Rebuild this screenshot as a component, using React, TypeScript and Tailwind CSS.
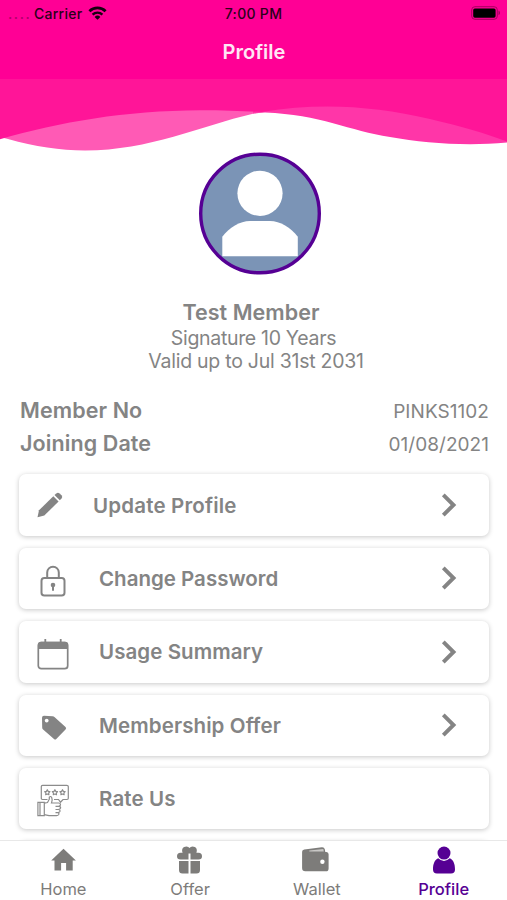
import React from "react";

interface IconProps {
  className?: string;
}

function WifiIcon() {
  return (
    <svg className="w-[19px] h-[14px]" viewBox="0 0 19 14" fill="none">
      <path d="M1.4 5.2a11.6 11.6 0 0 1 16.2 0" stroke="#160010" strokeWidth="2.8" />
      <path d="M4.6 8.6a7 7 0 0 1 9.8 0" stroke="#160010" strokeWidth="2.4" />
      <path d="M9.5 13.8 6.6 10.9a4.2 4.2 0 0 1 5.8 0z" fill="#160010" />
    </svg>
  );
}

function BatteryIcon() {
  return (
    <svg className="w-[30px] h-[14px]" viewBox="0 0 30 14">
      <rect x="0.7" y="0.7" width="25.6" height="12.6" rx="3.2" fill="none" stroke="#a8005f" />
      <rect x="2.2" y="2.4" width="22.4" height="9.3" rx="1.6" fill="#000" />
      <path d="M27.5 4.8c2 .5 2 3.9 0 4.4z" fill="#a8005f" />
    </svg>
  );
}

function Waves() {
  return (
    <svg className="block w-full h-[73px]" viewBox="0 79 507 73" preserveAspectRatio="none">
      <path
        d="M0 79V137L8 139C35 146.500 60 150.500 85 150.500C150 150.500 200 126 253 113.800L265 112V79Z"
        fill="#ff5ab5"
      />
      <path
        d="M253 79V113.500Q259 112.400 265 112.500C320 114.500 350 131 390 137C425 143 465 146.500 507 142.500V79Z"
        fill="#ff36a8"
      />
      <path
        d="M0 79V139.200C60 122 125 110.500 200 110.200C225 110.200 245 111 262 112C320 102 375 106 430 119C460 126 485 133 507 141.500V79Z"
        fill="#ff1598"
      />
    </svg>
  );
}

function Avatar() {
  return (
    <svg className="w-[122px] h-[123px]" viewBox="0 0 122 123">
      <circle cx="61" cy="61.500" r="59.300" fill="#7b94b6" stroke="#560094" strokeWidth="3.400" />
      <circle cx="61" cy="41.300" r="22.600" fill="#fff" />
      <path d="M23.300 104.300V84.800C30 75.500 41 69 51 69H71C81 69 92 75.500 98.800 84.800V104.300Z" fill="#fff" />
    </svg>
  );
}

function PencilIcon() {
  return (
    <svg className="w-[26px] h-[26px]" viewBox="0 0 26 26" fill="#848484">
      <path d="M.5 25.200 2 18.300 16.300 4.300 21.600 9.500 7.300 23.500Z" />
      <path d="M17.500 3.100 19.300 1.400Q20.900 0 22.600 1.400L24.500 3.300Q26 5 24.500 6.600L22.800 8.300Z" />
    </svg>
  );
}

function LockIcon() {
  return (
    <svg className="w-[26px] h-[32px]" viewBox="0 0 26 32" fill="none" stroke="#848484" strokeWidth="2">
      <path d="M7.200 13V7.500a5.800 5.800 0 0 1 11.600 0V13" />
      <rect x="1.500" y="13" width="23" height="17.600" rx="2.800" />
      <circle cx="13" cy="20" r="2.300" fill="#848484" stroke="none" />
      <path d="M13 20.500V25.700" />
    </svg>
  );
}

function CalendarIcon() {
  return (
    <svg className="w-[32px] h-[32px]" viewBox="0 0 32 32">
      <rect x="1.300" y="4.500" width="29.400" height="26.200" rx="3" fill="none" stroke="#848484" strokeWidth="1.700" />
      <path d="M1 11V6.500Q1 3.700 4 3.700H28Q31 3.700 31 6.500V11Z" fill="#848484" />
      <path d="M8.300 1V6M23.700 1V6" stroke="#848484" strokeWidth="1.800" />
    </svg>
  );
}

function TagIcon() {
  return (
    <svg className="w-[26px] h-[26px]" viewBox="0 0 26 26">
      <path
        d="M1 2.800Q1 .8 3 .8L11.500 1.300Q12.800 1.400 13.700 2.200L24.500 12Q25.800 13.200 24.500 14.400L15.300 24Q14.200 25.100 13 24L2.100 14.600Q1.200 13.800 1.200 12.500Z"
        fill="#848484"
      />
      <circle cx="5.700" cy="5.600" r="1.900" fill="#fff" />
    </svg>
  );
}

const STAR = "M0-2.600.9-.9 2.600-.6 1.400.7 1.600 2.400 0 1.700-1.600 2.400-1.400.7-2.600-.6-.9-.9Z";

function RateIcon() {
  return (
    <svg className="w-[33px] h-[33px]" viewBox="0 0 33 33" fill="none" stroke="#8c8c8c" strokeWidth="1.200">
      <path d="M10.500 15.500H5.500Q4.300 15.500 4.300 14.300V2.500Q4.300 1.300 5.500 1.300H29.800Q31.300 1.300 31.300 2.500V14.300Q31.300 15.500 30 15.500H26L23.500 18.200 21.500 15.500H17" />
      <path d={STAR} transform="translate(10.300 8.300)" strokeLinejoin="round" />
      <path d={STAR} transform="translate(17.900 8.300)" strokeLinejoin="round" />
      <path d={STAR} transform="translate(25.500 8.300)" strokeLinejoin="round" />
      <path d="M.9 18.300H7.300V31.700H.9ZM3 18.300V31.700" />
      <path d="M7.300 19.200 10.500 18.500 12.300 15.200V13.200Q13.500 11.700 14.700 13.500 15.800 16 14.500 19H21.800Q23.600 19.200 23.500 20.600 23.400 22.200 21.500 22.300H18.500M21.800 22.300Q24.100 22.700 23.500 24.300 23 25.500 21.300 25.500H18.500M21.500 25.500Q23.500 26 22.900 27.500 22.400 28.600 20.800 28.600H18.500M21 28.600Q22.400 29.400 21.800 30.500 21 31.600 19.500 31.600H12L7.300 30.600" />
    </svg>
  );
}

function ChevronIcon() {
  return (
    <svg className="w-[16px] h-[26px]" viewBox="0 0 16 26" fill="none">
      <path d="M2.300 2.900 12.500 13 2.300 23.100" stroke="#848484" strokeWidth="3.900" />
    </svg>
  );
}

function HomeIcon({ className }: IconProps) {
  return (
    <svg className={className} viewBox="0 0 28 28" fill="currentColor">
      <path d="M14.500 2.700 2.200 14.400H5.500V24.500H12.100V17H17.100V24.500H23.700V14.400H26.900Z" />
    </svg>
  );
}

function GiftIcon({ className }: IconProps) {
  return (
    <svg className={className} viewBox="0 0 28 28" fill="currentColor">
      <path d="M4.500 6.700H6.600C5.200 3.500 7 .6 10.500.6Q12.500.7 13.500 2 14.500.7 16.500.6C20 .6 21.800 3.500 20.400 6.700H22.500Q26 7 26 10.200 26 13.400 22.500 13.500H14.500V7.500H12.500V13.500H4.500Q1 13.400 1 10.200 1 7 4.500 6.700Z" />
      <path d="M3 15H12.500V27.500H6.500Q3 27.500 3 24ZM14.500 15H24V24Q24 27.500 20.500 27.500H14.500Z" />
    </svg>
  );
}

function WalletIcon({ className }: IconProps) {
  return (
    <svg className={className} viewBox="0 0 28 28" fill="currentColor">
      <path d="M-.9 5.800Q-.9 3.900 1.300 3.600L18.800 1.300Q21.300 1.100 21.800 3.300L22.300 6H23.500Q25.600 6.200 25.600 8.300V22.400Q25.600 25.300 22.800 25.300H2.300Q-.9 25.300-.9 22.100Z" />
      <path d="M6.300 4.600 20.300 3.100 20.800 5.500H6.300Z" fill="#c9c8c6" />
      <circle cx="19.400" cy="15.800" r="2.200" fill="#fff" />
    </svg>
  );
}

function PersonIcon({ className }: IconProps) {
  return (
    <svg className={className} viewBox="0 0 28 28" fill="currentColor">
      <circle cx="14" cy="7.100" r="6.500" />
      <path d="M8.200 12.300Q14 17.700 19.800 12.300C23.500 14 25 18 25 23.500Q25 27.400 21 27.400H7Q3 27.400 3 23.500C3 18 4.500 14 8.200 12.300Z" />
    </svg>
  );
}

const menuItems = [
  {
    label: "Update Profile",
    icon: <PencilIcon />,
    iconClass: "pl-[18px] w-[74px]",
    labelClass: "tracking-[0.18px]",
    arrow: true,
  },
  {
    label: "Change Password",
    icon: <LockIcon />,
    iconClass: "pl-[21px] pt-[5px] w-[80px]",
    labelClass: "tracking-[0px]",
    arrow: true,
  },
  {
    label: "Usage Summary",
    icon: <CalendarIcon />,
    iconClass: "pl-[18px] pt-[5px] w-[80px]",
    labelClass: "tracking-[0.07px]",
    arrow: true,
  },
  {
    label: "Membership Offer",
    icon: <TagIcon />,
    iconClass: "pl-[22px] pt-[5px] w-[80px]",
    labelClass: "tracking-[0.1px]",
    arrow: true,
  },
  {
    label: "Rate Us",
    icon: <RateIcon />,
    iconClass: "pl-[18px] pt-[4px] w-[80px]",
    labelClass: "tracking-[0.15px]",
    arrow: false,
  },
];

const tabs = [
  { label: "Home", Icon: HomeIcon },
  { label: "Offer", Icon: GiftIcon },
  { label: "Wallet", Icon: WalletIcon },
  { label: "Profile", Icon: PersonIcon },
];

function App() {
  const selectedTab = "Profile";

  return (
    <div className="w-full h-[900px] flex flex-col overflow-hidden bg-white font-[Inter,sans-serif] text-[#848484]">
      <header className="h-[79px] shrink-0 bg-[#ff0095]">
        <div className="h-[26px] pl-[8px] pr-[6px] grid grid-cols-3 items-center text-[#2b0019] text-[14px] font-medium">
          <div className="flex items-center">
            <span className="w-[26px] text-[#b0006a] tracking-[1.600px]">....</span>
            <span className="mr-[6px] tracking-[0.25px]">Carrier</span>
            <WifiIcon />
          </div>
          <div className="pr-[2px] text-center tracking-[0.3px]">7:00 PM</div>
          <div className="flex justify-end">
            <BatteryIcon />
          </div>
        </div>
        <h1 className="h-[53px] pl-px text-center text-[20px] leading-[53px] font-semibold text-[#ffe6f5]">
          Profile
        </h1>
      </header>

      <main className="flex-1 min-h-0 overflow-hidden">
        <Waves />

        <div className="pl-[13px] h-[122px] flex justify-center">
          <Avatar />
        </div>

        <div className="pt-[25px] pl-[5px] text-center">
          <div className="pr-[10px] text-[21.500px] leading-[26px] font-semibold tracking-[0.05px]">
            Test Member
          </div>
          <div className="pt-px pr-[5px] text-[19.500px] leading-[24px] tracking-[-0.32px]">
            Signature 10 Years
          </div>
          <div className="text-[19.500px] leading-[23px] tracking-[-0.26px]">
            Valid up to Jul 31st 2031
          </div>
        </div>

        <div className="pt-[21px] pl-[20px] pr-[18px]">
          <div className="h-[33px] flex items-center justify-between">
            <span className="text-[21.500px] font-semibold tracking-[0.1px]">Member No</span>
            <span className="pt-[3px] text-[19px] tracking-[0.05px]">PINKS1102</span>
          </div>
          <div className="h-[33px] flex items-center justify-between">
            <span className="text-[21.500px] font-semibold tracking-[0.1px]">Joining Date</span>
            <span className="pt-[3px] text-[19px] tracking-[0.05px]">01/08/2021</span>
          </div>
        </div>

        <div className="pt-[14.400px] pl-[19px] pr-[18px] flex flex-col gap-[12px]">
          {menuItems.map(({ label, icon, iconClass, labelClass, arrow }) => (
            <button
              key={label}
              className="h-[61.400px] shrink-0 flex items-center rounded-[7px] bg-white shadow-[0_1px_5px_rgba(0,0,0,0.22)]"
            >
              <span className={`shrink-0 flex ${iconClass}`}>{icon}</span>
              <span className={`flex-1 pt-[2px] text-left text-[20.500px] font-semibold ${labelClass}`}>
                {label}
              </span>
              {arrow && (
                <span className="mr-[32px]">
                  <ChevronIcon />
                </span>
              )}
            </button>
          ))}
          <div className="h-[61px] shrink-0 rounded-[7px] bg-white shadow-[0_1px_5px_rgba(0,0,0,0.22)]" />
        </div>
      </main>

      <nav className="h-[60px] shrink-0 grid grid-cols-4 border-t border-[#e8e8e8] bg-white">
        {tabs.map(({ label, Icon }) => (
          <button
            key={label}
            className={`pt-[5px] flex flex-col items-center ${
              label === selectedTab ? "text-[#560094]" : "text-[#7d7c7a]"
            }`}
          >
            <Icon className="w-[28px] h-[28px] overflow-visible" />
            <span
              className={`mt-[4px] text-[16.500px] leading-[22px] ${
                label === selectedTab ? "font-medium" : ""
              }`}
            >
              {label}
            </span>
          </button>
        ))}
      </nav>
    </div>
  );
}

export default App;
